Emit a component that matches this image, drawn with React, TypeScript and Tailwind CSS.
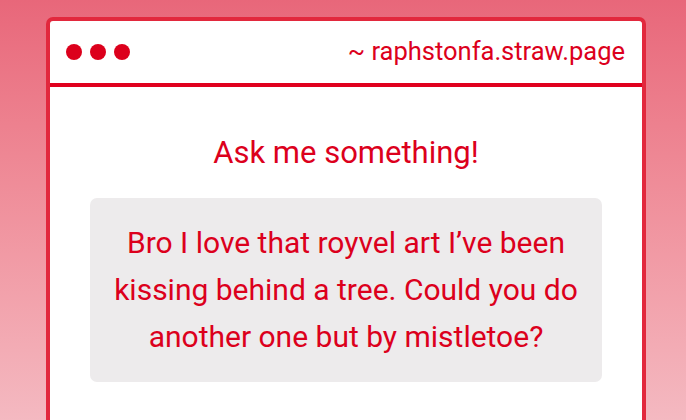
export default function App() {
  return (
    <div
      className="h-[420px] w-[686px] overflow-hidden bg-gradient-to-b from-[#e8677a] to-[#f4b9c1] pt-[17px] pl-[46px]"
      style={{ fontFamily: 'Roboto, "Liberation Sans", sans-serif' }}
    >
      {/* Window */}
      <div className="w-[600px] h-[440px] rounded-t-[7px] border-[4px] border-b-0 border-[#e2283d] bg-white">
        {/* Title bar */}
        <div className="flex h-[66px] items-center justify-between border-b-[4px] border-[#e0001e] pl-[16px] pr-[17px]">
          <div className="flex gap-[8px]">
            <span className="h-[16px] w-[16px] rounded-full bg-[#dc001c]" />
            <span className="h-[16px] w-[16px] rounded-full bg-[#dc001c]" />
            <span className="h-[16px] w-[16px] rounded-full bg-[#dc001c]" />
          </div>
          <span className="text-[25.5px] leading-none text-[#dc001c]">~ raphstonfa.straw.page</span>
        </div>

        {/* Body */}
        <div className="flex flex-col items-center pt-[46px]">
          <h1 className="text-[31px] leading-[40px] text-[#dc001c]">Ask me something!</h1>
          <div className="mt-[25px] w-[512px] rounded-[7px] bg-[#edebec] px-[16px] pt-[21px] pb-[22px] text-center text-[30px] leading-[47px] text-[#dc001c]">
            Bro I love that royvel art I’ve been kissing behind a tree. Could you do another one but by mistletoe?
          </div>
        </div>
      </div>
    </div>
  );
}
